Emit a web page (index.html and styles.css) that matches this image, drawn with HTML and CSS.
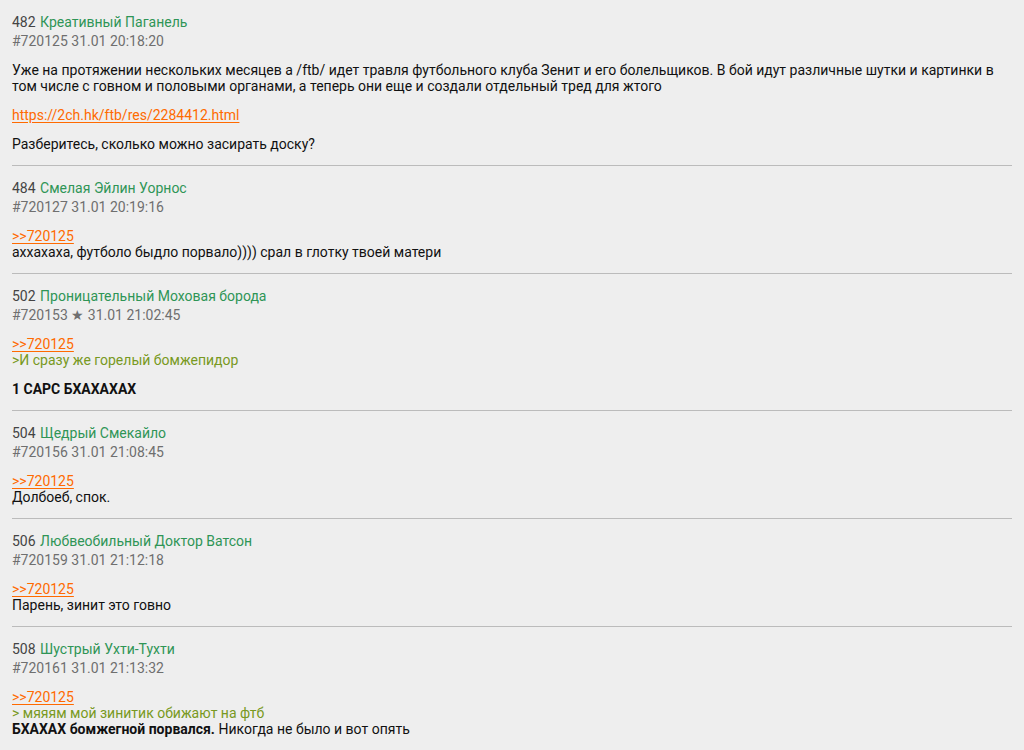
FILE: index.html
```html
<!DOCTYPE html>
<html lang="ru">
<head>
<meta charset="utf-8">
<link rel="stylesheet" href="styles.css">
</head>
<body>
<div class="thread">
  <div class="post">
    <div class="head"><span class="num">482</span> <span class="name">Креативный Паганель</span></div>
    <div class="meta">#720125 31.01 20:18:20</div>
    <div class="body">
      <p>Уже на протяжении нескольких месяцев а /ftb/ идет травля футбольного клуба Зенит и его болельщиков. В бой идут различные шутки и картинки в том числе с говном и половыми органами, а теперь они еще и создали отдельный тред для жтого</p>
      <p><a class="link" href="#">https://2ch.hk/ftb/res/2284412.html</a></p>
      <p>Разберитесь, сколько можно засирать доску?</p>
    </div>
  </div>
  <div class="post">
    <div class="head"><span class="num">484</span> <span class="name">Смелая Эйлин Уорнос</span></div>
    <div class="meta">#720127 31.01 20:19:16</div>
    <div class="body">
      <p><a class="link" href="#">&gt;&gt;720125</a><br>аххахаха, футболо быдло порвало)))) срал в глотку твоей матери</p>
    </div>
  </div>
  <div class="post">
    <div class="head"><span class="num">502</span> <span class="name">Проницательный Моховая борода</span></div>
    <div class="meta">#720153 ★ 31.01 21:02:45</div>
    <div class="body">
      <p><a class="link" href="#">&gt;&gt;720125</a><br><span class="quote">&gt;И сразу же горелый бомжепидор</span></p>
      <p><b>1 САРС БХАХАХАХ</b></p>
    </div>
  </div>
  <div class="post">
    <div class="head"><span class="num">504</span> <span class="name">Щедрый Смекайло</span></div>
    <div class="meta">#720156 31.01 21:08:45</div>
    <div class="body">
      <p><a class="link" href="#">&gt;&gt;720125</a><br>Долбоеб, спок.</p>
    </div>
  </div>
  <div class="post">
    <div class="head"><span class="num">506</span> <span class="name">Любвеобильный Доктор Ватсон</span></div>
    <div class="meta">#720159 31.01 21:12:18</div>
    <div class="body">
      <p><a class="link" href="#">&gt;&gt;720125</a><br>Парень, зинит это говно</p>
    </div>
  </div>
  <div class="post">
    <div class="head"><span class="num">508</span> <span class="name">Шустрый Ухти-Тухти</span></div>
    <div class="meta">#720161 31.01 21:13:32</div>
    <div class="body">
      <p><a class="link" href="#">&gt;&gt;720125</a><br><span class="quote">&gt; мяяям мой зинитик обижают на фтб</span><br><b>БХАХАХ бомжегной порвался.</b> Никогда не было и вот опять</p>
    </div>
  </div>
</div>
</body>
</html>
```

FILE: styles.css
```css
html, body {
  margin: 0;
  padding: 0;
  background: #eeeeee;
}
body {
  font-family: Roboto, "Noto Sans", sans-serif;
  font-size: 14px;
  color: #111111;
}
.thread {
  width: 1000px;
  padding: 0 12px;
}
.post {
  padding: 13px 0 13px;
  border-bottom: 1px solid #bbbbbb;
}
.head, .meta {
  line-height: 19px;
}
.num {
  color: #444444;
  margin-right: 1px;
}
.name {
  color: #2f9556;
}
.meta {
  color: #6f6f6f;
}
.body {
  margin-top: 11px;
  line-height: 16px;
}
.body p {
  margin: 13px 0 0;
}
.body p:first-child {
  margin-top: 0;
}
.link {
  color: #ff6a00;
  text-decoration: underline;
  text-underline-offset: 2px;
}
.quote {
  color: #789922;
}
b {
  font-weight: 700;
}
```
